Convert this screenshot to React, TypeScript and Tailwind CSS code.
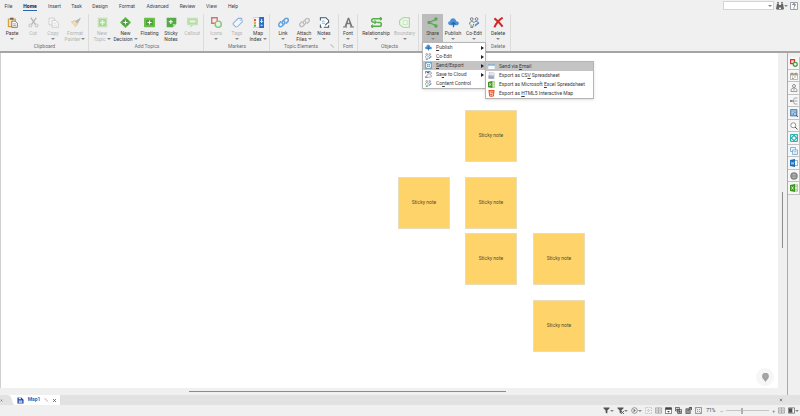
import type { ReactNode } from "react";

type IconProps = { name: string; className?: string };

const GREEN = "#6cc04a";

/* All icons share a 16x16 box */
const icons: Record<string, ReactNode> = {
  paste: (
    <>
      <path d="M2 3h10v11H2z" fill="#fbe3b4" stroke="#d99a3a" strokeWidth="1.6" />
      <path d="M4.500 1h5v3h-5z" fill="#666" />
      <path d="M7 6h5l3 3v6H7z" fill="#fff" stroke="#666" strokeWidth="1.200" />
      <path d="M9 10h4M9 12.500h4" stroke="#777" />
    </>
  ),
  cut: (
    <>
      <path d="M4 1l7 10M12 1L5 11" stroke="#b4b4b4" strokeWidth="1.800" />
      <circle cx="3.500" cy="12.500" r="2.200" fill="none" stroke="#c4c4c4" strokeWidth="1.500" />
      <circle cx="12.500" cy="12.500" r="2.200" fill="none" stroke="#c4c4c4" strokeWidth="1.500" />
    </>
  ),
  copy: (
    <>
      <path d="M1.500 1.500h8v10h-8z" fill="#f4f4f4" stroke="#c6c6c6" />
      <path d="M6 5h5l4 4v6H6z" fill="#fafafa" stroke="#bdbdbd" />
      <path d="M8 9h4M8 12h5" stroke="#cfcfcf" />
    </>
  ),
  painter: (
    <>
      <path d="M2 7l6 7 3-4-4-5z" fill="#f5ddb0" stroke="#dfc18e" />
      <path d="M8 6l3 3 4-7z" fill="#bbb" stroke="#aaa" />
    </>
  ),
  newTopic: (
    <>
      <path d="M1 1h14v14H1z" fill="#c5e5b8" />
      <path d="M3 3h10v10H3z" fill="#a6d695" />
      <path d="M8 4.500v7M4.500 8h7" stroke="#e9f6e4" strokeWidth="2" />
    </>
  ),
  decision: (
    <>
      <path d="M8 0l8 8-8 8-8-8z" fill="#5fb14a" />
      <path d="M4 4h8v8H4z" fill="#4a9f3b" />
      <path d="M8 5v6M5 8h6" stroke="#fff" strokeWidth="1.600" />
    </>
  ),
  floating: (
    <>
      <rect y="1" width="16" height="14" rx="1" fill={GREEN} />
      <path d="M3 4h10v8H3z" fill="#4da23b" />
      <path d="M8 5v6M5 8h6" stroke="#fff" strokeWidth="1.600" />
    </>
  ),
  sticky: (
    <>
      <path d="M1 1h14v9l-5 5H1z" fill="#55a946" />
      <path d="M10 15v-5h5z" fill="#a9dd98" />
      <path d="M7 4v6M4 7h6" stroke="#fff" strokeWidth="1.500" />
    </>
  ),
  callout: (
    <>
      <path d="M0 1h16v11H9l-4 4v-4H0z" fill="#c2e3b6" />
      <path d="M3 4h10v5H3z" fill="#e2f2db" stroke="#9fd08d" />
    </>
  ),
  markers: (
    <>
      <path d="M1 1h8v8H1z" fill="none" stroke="#d87070" strokeWidth="2" />
      <circle cx="10.500" cy="10.500" r="4.500" fill="#e7f4e3" stroke="#8ac27c" strokeWidth="2" />
    </>
  ),
  sideMarkers: (
    <>
      <path d="M1 1h8v8H1z" fill="#f4cccc" stroke="#c93b3b" strokeWidth="2.500" />
      <circle cx="10.500" cy="10.500" r="4" fill="#e7f4e3" stroke="#4b9a3d" strokeWidth="2.500" />
    </>
  ),
  tag: (
    <>
      <path d="M2 9l7-7 5 0 1 5-7 7q-2 1-3 0l-3-3q-1-1 0-2z" fill="#f3f7fc" stroke="#8fb2dc" strokeWidth="1.500" />
      <circle cx="12" cy="4.500" r="1" fill="#8fb2dc" />
    </>
  ),
  index: (
    <>
      <path d="M0 1h9v14H0z" fill="#fff" stroke="#aaa" strokeWidth=".7" />
      <path d="M1.500 3h3v3h-3z" fill="#dd5b4d" />
      <path d="M1.500 7h3v3h-3z" fill="#e8aa32" />
      <path d="M1.500 11h3v3h-3z" fill="#5fae4b" />
      <path d="M9 0h7v16H9z" fill="#2b6dc5" />
      <path d="M12.500 3v5m-2-2l2 2 2-2M11 12h3" stroke="#fff" fill="none" strokeWidth="1.300" />
    </>
  ),
  link: (
    <g fill="none" stroke="#64a2dc" strokeWidth="2.200" strokeLinecap="round">
      <path d="M7 10c-2-2-1-3 0-4l3-3c3-3 7 1 4 4l-2 2" />
      <path d="M9 6c2 2 1 3 0 4l-3 3c-3 3-7-1-4-4l2-2" />
    </g>
  ),
  clip: (
    <g fill="none" stroke="#bcbcbc" strokeWidth="2" strokeLinecap="round">
      <path d="M7 10c-2-2-1-3 0-4l3-3c3-3 7 1 4 4l-2 2" />
      <path d="M9 6c2 2 1 3 0 4l-3 3c-3 3-7-1-4-4l2-2" />
    </g>
  ),
  notes: (
    <>
      <path d="M2 1h8l4 4v10H2z" fill="#fff" />
      <path d="M2 5V1h8l4 4v4M14 12v3H7M2 11v4h2" fill="none" stroke="#3a5672" strokeWidth="1.500" />
      <path d="M4 9h5M4 6h4" stroke="#70a7db" strokeWidth="1.300" />
      <path d="M9 12l4-4" stroke="#333" strokeWidth="1.500" />
    </>
  ),
  font: (
    <>
      <path d="M2 14L7 1h2l5 13h-3l-1-3.500H6L5 14zM6.700 8.500h2.700L8 4z" fill="#777" />
      <path d="M0 14.500h6M10 14.500h6" stroke="#777" strokeWidth="1.600" />
    </>
  ),
  relation: (
    <g fill="none" stroke="#55ad49" strokeWidth="2.200">
      <path d="M16 2.500H3q-2 0-2 2.500t3 2.500h3M0 13.500h13q2 0 2-3t-3-2.500H9" />
      <path d="M13 0l3 2.500L13 5M5 5l3 2.500L5 10M3 11l-3 2.500L3 16" strokeWidth="1.500" />
    </g>
  ),
  boundary: (
    <>
      <path d="M6 1h9v14H6L1 11V5z" fill="#f1f8ee" stroke="#9ed391" strokeWidth="1.500" />
      <path d="M6 5h6v6H6z" fill="none" stroke="#b3dda9" />
    </>
  ),
  share: (
    <>
      <path d="M14 3L3 8l11 5" fill="none" stroke="#55ab4b" strokeWidth="1.800" />
      <circle cx="13" cy="3" r="2.500" fill="#55ab4b" />
      <circle cx="3" cy="8" r="2.500" fill="#55ab4b" />
      <circle cx="13" cy="13" r="2.500" fill="#55ab4b" />
    </>
  ),
  cloud: (
    <>
      <path d="M4 12C-1 12-1 6 3 6c1-6 8-5 9 0 5 0 5 6 0 6z" fill="#4b91d8" />
      <path d="M8 15V8M5 10.500L8 8l3 2.500" fill="none" stroke="#2866ad" strokeWidth="1.800" />
    </>
  ),
  people: (
    <>
      <circle cx="4" cy="3" r="2" fill="none" stroke="#667" strokeWidth="1.200" />
      <circle cx="11" cy="3" r="2" fill="none" stroke="#667" strokeWidth="1.200" />
      <path d="M1 11V8q3-4 6 0 3-4 7 0M3 14v-3M5 15l2-5" fill="none" stroke="#667" strokeWidth="1.200" />
      <path d="M8 14l1-3 5-4 1 2-5 4z" fill="#4d8dcb" />
      <path d="M2 15h4" stroke="#5aab4b" strokeWidth="2" />
    </>
  ),
  delete: <path d="M2 2q7 5 12 12M14 1Q6 6 2 15" fill="none" stroke="#cf2929" strokeWidth="3" />,
  exportBox: (
    <>
      <path d="M1 1h14v14H1z" fill="#e8f5fc" stroke="#3b83ba" strokeWidth="1.500" />
      <path d="M3 3l10 10M13 3L3 13" stroke="#3c87ba" strokeWidth="1.500" />
      <path d="M6 6h4v4H6z" fill="#fff" stroke="#3b83ba" />
    </>
  ),
  saveCloud: (
    <>
      <path d="M1 6V1h11l2 3v3M1 12v3h5" fill="none" stroke="#555" strokeWidth="1.500" />
      <path d="M4 2h6v3H4z" fill="#666" />
      <path d="M6 14c-4 0-3-5 0-5 1-4 6-3 6 0 4 0 4 5 0 5z" fill="#fff" stroke="#668" strokeWidth="1.200" />
    </>
  ),
  mail: (
    <>
      <path d="M0 3h16v12H0z" fill="#fff" stroke="#7c98b8" />
      <path d="M0 3h16v3H0z" fill="#7ba7c7" />
      <path d="M2 7l6 4 6-4" fill="none" stroke="#d5dde5" />
    </>
  ),
  csv: (
    <>
      <path d="M3 0h8l3 3v12H3z" fill="#f5f6fa" stroke="#8c94a5" />
      <path d="M1 8h12v7H1z" fill="#929bb6" />
      <path d="M5 3h5M5 6h6M3 11h8" stroke="#c2cada" strokeWidth="1.300" />
    </>
  ),
  excel: (
    <>
      <path d="M8 2h8v12H8z" fill="#fff" stroke="#5fa831" strokeWidth="1.500" />
      <path d="M10 5h5M10 8h5M10 11h5" stroke="#5fa831" />
      <path d="M0 2l10-2v16L0 14z" fill="#3f9420" />
      <path d="M3 5l4 6M7 5l-4 6" stroke="#fff" strokeWidth="1.500" />
    </>
  ),
  html: (
    <>
      <path d="M1 0h14l-1.500 14L8 16l-5.500-2z" fill="#e35a2c" />
      <path d="M12 4H5v4h6l-.5 4-2.500 1-3-1v-1.500" fill="none" stroke="#fff" strokeWidth="1.500" />
    </>
  ),
  binoculars: (
    <>
      <path d="M2 3h4v3h4V3h4l2 11h-6v-3H6v3H0z" fill="#666" />
      <path d="M2 1h4M10 1h4M1 15.500h14" stroke="#555" strokeWidth="1.500" />
    </>
  ),
  help: (
    <>
      <path d="M1 1h14v14H1z" fill="#fafafa" stroke="#7b8490" strokeWidth="1.500" />
      <path d="M5.500 6Q5.500 3.500 8 3.500T10.500 6Q10.500 7 8 9M8 11v2" fill="none" stroke="#445" strokeWidth="1.800" />
    </>
  ),
  calendar: (
    <>
      <path d="M1 3h14v12H1z" fill="#fff" stroke="#7d7a66" />
      <path d="M1 3h14v4H1z" fill="#a9a583" />
      <path d="M4 1v4M12 1v4M4 10h2M8 10h4M4 13h4" stroke="#777" strokeWidth="1.300" />
    </>
  ),
  person: (
    <>
      <circle cx="8" cy="4" r="3" fill="none" stroke="#777" strokeWidth="1.500" />
      <path d="M2 15V11l4-3h4l4 3v4zM8 9v4" fill="none" stroke="#777" strokeWidth="1.400" />
    </>
  ),
  branches: (
    <>
      <path d="M1 8h5M15 2H9L6 8l3 6h6M6 8h9" fill="none" stroke="#7d7d7d" strokeWidth="1.300" />
      <path d="M0 6h5v4H0z" fill="#888" />
    </>
  ),
  library: (
    <>
      <path d="M1 1h13v13H1z" fill="#73a9d7" stroke="#46749c" strokeWidth="1.400" />
      <path d="M3 4h9M3 7h9M3 10h5" stroke="#e4f1fb" />
      <circle cx="10" cy="10" r="3" fill="#c4dcf0" stroke="#365f85" />
      <path d="M12 12l4 4" stroke="#365f85" strokeWidth="2" />
    </>
  ),
  search: (
    <>
      <circle cx="6.500" cy="6.500" r="5" fill="#fff" stroke="#727272" strokeWidth="1.500" />
      <path d="M10 10l5 5" stroke="#555" strokeWidth="2" />
    </>
  ),
  focus: (
    <>
      <rect width="16" height="16" rx="2" fill="#32b3b0" />
      <path d="M3 6V3h3M10 3h3v3M13 10v3h-3M6 13H3v-3" fill="none" stroke="#fff" strokeWidth="1.500" />
      <circle cx="8" cy="8" r="3" fill="#fff" />
    </>
  ),
  layers: (
    <>
      <path d="M1 1h10v8H1z" fill="#e9f4fc" stroke="#5a9bd0" strokeWidth="1.400" />
      <path d="M5 6h10v9H5z" fill="#fff" stroke="#5a9bd0" strokeWidth="1.400" />
      <path d="M7 9h6M7 12h6" stroke="#5a9bd0" />
    </>
  ),
  word: (
    <>
      <path d="M9 3h6v10H9z" fill="#fff" stroke="#2777bd" />
      <path d="M0 2l10-2v16L0 14z" fill="#1769b5" />
      <path d="M2 5l1.500 6L5 7l1.500 4L8 5" fill="none" stroke="#fff" />
    </>
  ),
  globe: (
    <>
      <circle cx="8" cy="8" r="7.500" fill="#858585" />
      <path d="M4 5h8M3 8h10M4 11h8M8 3v10" stroke="#d5d5d5" strokeWidth=".8" />
    </>
  ),
  map: (
    <>
      <path d="M1 1h9l5 5v9H1z" fill="#26479f" />
      <path d="M4 1h5v4H4zM4 8h8v5H4z" fill="#dbe5fb" />
      <path d="M6 10h4" stroke="#26479f" />
    </>
  ),
  pencil: <path d="M2 3l3-1 9 9-2 2zM12 13l3 2" fill="none" stroke="#888" strokeWidth="1.500" />,
  close: <path d="M3 3l10 10M13 3L3 13" stroke="#555" strokeWidth="2.500" />,
  filter: <path d="M1 1h14v2L10 8v7l-4-2V8L1 3z" fill="#555" />,
  filterEdit: (
    <>
      <path d="M1 1h14v2L10 8v7l-4-2V8L1 3z" fill="#555" />
      <path d="M9 9l7 7M16 9l-7 7" stroke="#555" strokeWidth="2" />
    </>
  ),
  clock: (
    <>
      <circle cx="8" cy="8" r="6.500" fill="none" stroke="#6b6b6b" strokeWidth="1.500" />
      <path d="M6 4l5 4-5 4z" fill="#666" />
    </>
  ),
  dotted: <path d="M1 1h14v14H1zM5 8h6M8 5v6" fill="none" stroke="#a0a0a0" strokeWidth="1.500" strokeDasharray="2 2" />,
  panes: <path d="M1 2h14v12H1zM8 2v12M3 5h3M10 5h3M3 8h3M10 8h3M3 11h3M10 11h3" fill="none" stroke="#777" strokeWidth="1.200" />,
  schedule: (
    <>
      <path d="M1 2h14v13H1z" fill="#fff" stroke="#444" strokeWidth="1.500" />
      <path d="M1 1h14v5H1zM5 9h6l-3 4z" fill="#444" />
    </>
  ),
  linked: (
    <>
      <path d="M1 1h9v8H1zM6 6h9v9H6z" fill="#eee" stroke="#444" strokeWidth="1.700" />
      <path d="M3 4h5v3H3zM8 9h5v4H8z" fill="#555" />
    </>
  ),
  slides: (
    <>
      <path d="M2 4h10v11H2z" fill="#999" stroke="#444" strokeWidth="1.500" />
      <path d="M6 9l8-8M9 1h6v6" fill="none" stroke="#444" strokeWidth="2" />
    </>
  ),
  expand: <path d="M1 1h14v14H1zM4 4l3 3M12 4L9 7M4 12l3-3M9 9l4 4" fill="none" stroke="#666" strokeWidth="1.500" />,
  panel: (
    <>
      <path d="M1 2h14v12H1z" fill="#fff" stroke="#4a4a4a" strokeWidth="1.500" />
      <path d="M2 3h8v10H2z" fill="#505050" />
    </>
  ),
  pin: (
    <>
      <path d="M8 0C3 0 2 3 2 6c0 4 4 6 6 10 2-4 6-6 6-10 0-3-1-6-6-6z" fill="#a0a0a0" />
      <path d="M5 4h6M5 7h6" stroke="#b2b2b2" />
    </>
  ),
};

function Icon({ name, className = "size-[8px]" }: IconProps) {
  return (
    <svg viewBox="0 0 16 16" aria-hidden="true" className={`${className} shrink-0`}>
      {icons[name]}
    </svg>
  );
}

function Caret() {
  return (
    <svg viewBox="0 0 4 2" aria-hidden="true" className="h-[2px] w-[4px] shrink-0">
      <path d="M0 0h4L2 2z" fill="#888" />
    </svg>
  );
}

type Tool = {
  icon: string;
  label: string;
  second?: string;
  width: string;
  caret?: boolean;
  off?: boolean;
  active?: boolean;
};

type Group = { name: string; title?: string; className: string; tools: Tool[]; launcher?: boolean };

const groups: Group[] = [
  {
    name: "clipboard",
    title: "Clipboard",
    className: "w-[89px] pl-px",
    tools: [
      { icon: "paste", label: "Paste", width: "w-[22px]", caret: true },
      { icon: "cut", label: "Cut", width: "w-[20px]", off: true },
      { icon: "copy", label: "Copy", width: "w-[20px]", off: true, caret: true },
      { icon: "painter", label: "Format", second: "Painter", width: "w-[24px]", off: true, caret: true },
    ],
  },
  {
    name: "topics",
    title: "Add Topics",
    className: "w-[115px] pl-[2px]",
    tools: [
      { icon: "newTopic", label: "New", second: "Topic", width: "w-[22px]", off: true, caret: true },
      { icon: "decision", label: "New", second: "Decision", width: "w-[25px]", caret: true },
      { icon: "floating", label: "Floating", width: "w-[23px]" },
      { icon: "sticky", label: "Sticky", second: "Notes", width: "w-[20px]" },
      { icon: "callout", label: "Callout", width: "w-[22px]", off: true },
    ],
  },
  {
    name: "markers",
    title: "Markers",
    className: "w-[66px] pl-px",
    tools: [
      { icon: "markers", label: "Icons", width: "w-[22px]", off: true, caret: true },
      { icon: "tag", label: "Tags", width: "w-[20px]", off: true, caret: true },
      { icon: "index", label: "Map", second: "Index", width: "w-[22px]", caret: true },
    ],
  },
  {
    name: "elements",
    title: "Topic Elements",
    className: "w-[69px] pl-[2px]",
    launcher: true,
    tools: [
      { icon: "link", label: "Link", width: "w-[22px]", caret: true },
      { icon: "clip", label: "Attach", second: "Files", width: "w-[20px]", caret: true },
      { icon: "notes", label: "Notes", width: "w-[20px]", caret: true },
    ],
  },
  {
    name: "font",
    title: "Font",
    className: "w-[19px]",
    tools: [{ icon: "font", label: "Font", width: "w-[18px]", caret: true }],
  },
  {
    name: "objects",
    title: "Objects",
    className: "w-[61px] pl-[3px]",
    tools: [
      { icon: "relation", label: "Relationship", width: "w-[30px]", caret: true },
      { icon: "boundary", label: "Boundary", width: "w-[27px]", off: true, caret: true },
    ],
  },
  {
    name: "share",
    className: "w-[67px] pl-[3px]",
    tools: [
      { icon: "share", label: "Share", width: "w-[21px]", caret: true, active: true },
      { icon: "cloud", label: "Publish", width: "w-[20px]", caret: true },
      { icon: "people", label: "Co-Edit", width: "w-[22px]", caret: true },
    ],
  },
  {
    name: "delete",
    title: "Delete",
    className: "w-[25px]",
    tools: [{ icon: "delete", label: "Delete", width: "w-[24px]", caret: true }],
  },
];

const tabs = [
  { label: "File", width: "w-[17px]" },
  { label: "Home", width: "w-[26px]", active: true },
  { label: "Insert", width: "w-[23px]" },
  { label: "Task", width: "w-[21px]" },
  { label: "Design", width: "w-[26px]" },
  { label: "Format", width: "w-[28px]" },
  { label: "Advanced", width: "w-[33px]" },
  { label: "Review", width: "w-[27px]" },
  { label: "View", width: "w-[21px]" },
  { label: "Help", width: "w-[22px]" },
];

type Entry = { icon: string; before: string; key: string; after: string; more?: boolean; active?: boolean };

const shareMenu: Entry[] = [
  { icon: "cloud", before: "", key: "P", after: "ublish", more: true },
  { icon: "people", before: "", key: "C", after: "o-Edit", more: true },
  { icon: "exportBox", before: "", key: "S", after: "end/Export", more: true, active: true },
  { icon: "saveCloud", before: "Sa", key: "v", after: "e to Cloud", more: true },
  { icon: "people", before: "Co", key: "n", after: "tent Control" },
];

const exportMenu: Entry[] = [
  { icon: "mail", before: "Send via ", key: "E", after: "mail", active: true },
  { icon: "csv", before: "Export as CS", key: "V", after: " Spreadsheet" },
  { icon: "excel", before: "Export as Microsoft ", key: "E", after: "xcel Spreadsheet" },
  { icon: "html", before: "Export as ", key: "H", after: "TML5 Interactive Map" },
];

/* Positions on the map canvas */
const notes = [
  { left: 464, top: 57 },
  { left: 397, top: 124 },
  { left: 464, top: 124 },
  { left: 464, top: 180 },
  { left: 532, top: 180 },
  { left: 532, top: 247 },
];

const sideTools = [
  { icon: "sideMarkers", label: "Icons" },
  { icon: "calendar", label: "Task Info" },
  { icon: "person", label: "Resources" },
  { icon: "branches", label: "Map Parts" },
  { icon: "library", label: "Library" },
  { icon: "search", label: "Search" },
  { icon: "focus", label: "Focus" },
  { icon: "layers", label: "Snap" },
  { icon: "word", label: "Outlook" },
  { icon: "globe", label: "Browser" },
  { icon: "excel", label: "Excel" },
];

function ToolButton({ tool }: { tool: Tool }) {
  const { icon, label, second, width, caret, off, active } = tool;
  return (
    <button
      disabled={off}
      className={`flex h-[28px] flex-col items-center pt-[3px] leading-[6px] ${width} ${active ? "bg-[#bcbcbc]" : ""} ${off ? "text-[#b4b4b4]" : "text-[#3c3c3c]"}`}
    >
      <Icon name={icon} className="mb-[2px] size-[11px]" />
      <span>{label}</span>
      <span className="flex h-[6px] items-center gap-px">
        {second}
        {caret && <Caret />}
      </span>
    </button>
  );
}

function RibbonGroup({ group }: { group: Group }) {
  return (
    <section className={`flex shrink-0 flex-col border-r border-[#dcdcdc] ${group.className}`}>
      <div className="flex">
        {group.tools.map((tool, i) => (
          <ToolButton key={i} tool={tool} />
        ))}
      </div>
      {group.title && (
        <div className="flex justify-center pt-px leading-[6px] text-[#6f6f6f]">
          <span className="flex-1 text-center">{group.title}</span>
          {group.launcher && (
            <button aria-label="Topic Elements options" className="mr-[4px]">
              <Icon name="pencil" className="size-[4px]" />
            </button>
          )}
        </div>
      )}
    </section>
  );
}

function Menu({ items, label, className }: { items: Entry[]; label: string; className: string }) {
  return (
    <ul role="menu" aria-label={label} className={`absolute z-10 border border-[#b5b5b5] bg-white shadow-sm ${className}`}>
      {items.map((item) => (
        <li key={item.before + item.after} role="none">
          <button
            role="menuitem"
            className={`flex h-[9px] w-full items-center gap-[4px] pr-px pl-[2px] text-left leading-[9px] whitespace-nowrap text-[#3c3c3c] ${item.active ? "bg-[#c4c4c4]" : ""}`}
          >
            <Icon name={item.icon} className="size-[7px]" />
            <span className="flex-1">
              {item.before}
              <u>{item.key}</u>
              {item.after}
            </span>
            {item.more && (
              <svg viewBox="0 0 3 4" aria-hidden="true" className="h-[4px] w-[3px]">
                <path d="M0 0l3 2-3 2z" fill="#222" />
              </svg>
            )}
          </button>
        </li>
      ))}
    </ul>
  );
}

function StatusButton({ icon, label, caret }: { icon: string; label: string; caret?: boolean }) {
  return (
    <button aria-label={label} className="flex items-center">
      <Icon name={icon} className="size-[7px]" />
      {caret && <Caret />}
    </button>
  );
}

export default function App() {
  return (
    <div className="relative flex min-h-screen flex-col bg-[#f0f0f0] font-['Roboto','Noto_Sans',sans-serif] text-[5px] text-[#444]">
      <header className="border-b-2 border-[#a5a5a5]">
        <div className="flex h-[14px] items-start justify-between">
          <nav className="flex">
            {tabs.map((tab) => (
              <button
                key={tab.label}
                className={`flex h-[12px] flex-col items-center pt-[3px] leading-[7px] ${tab.width} ${tab.active ? "font-bold text-[#222]" : ""}`}
              >
                {tab.label}
                {tab.active && <span className="h-px w-[14px] shrink-0 bg-[#2a66b0]" />}
              </button>
            ))}
          </nav>
          <div className="flex items-center gap-[2px] pt-px pr-[2px]">
            <label className="flex h-[9px] w-[51px] items-center border border-[#d5d5d5] bg-white pr-px">
              <input aria-label="Search" className="w-full min-w-0 outline-none" />
              <Caret />
            </label>
            <button aria-label="Find" className="flex items-center">
              <Icon name="binoculars" className="size-[8px]" />
              <Caret />
            </button>
            <button aria-label="Help">
              <Icon name="help" className="size-[8px]" />
            </button>
          </div>
        </div>
        <div className="flex h-[37px]">
          {groups.map((group) => (
            <RibbonGroup key={group.name} group={group} />
          ))}
        </div>
      </header>

      <Menu items={shareMenu} label="Share" className="top-[42px] left-[422px] w-[64px]" />
      <Menu items={exportMenu} label="Send/Export" className="top-[61px] left-[485px] w-[109px]" />

      <div className="flex flex-1">
        <div className="flex min-w-0 flex-1 flex-col">
          <div className="flex flex-1">
            <main className="relative flex-1 border-l border-[#d0d0d0] bg-white">
              {notes.map((note, i) => (
                <div
                  key={i}
                  className="absolute flex size-[52px] items-center justify-center border border-[#e9dcb8] bg-[#fdd36a] text-[#5b4e30]"
                  style={{ left: note.left, top: note.top }}
                >
                  Sticky note
                </div>
              ))}
              <button aria-label="Map pin" className="absolute right-[4px] bottom-[2px] flex size-[18px] items-center justify-center rounded-full bg-[#f6f6f6]">
                <Icon name="pin" className="size-[9px]" />
              </button>
            </main>
            <div className="flex w-[9px] justify-center pt-[139px]">
              <div className="h-[56px] w-px bg-[#8c8c8c]" />
            </div>
          </div>
          <div className="h-[7px] pt-[3px] pl-[189px]">
            <div className="h-px w-[317px] bg-[#8c8c8c]" />
          </div>
        </div>
        <aside className="flex w-[13px] flex-col border-l border-[#aaa] pt-[4px]">
          {sideTools.map((tool, i) => (
            <button
              key={tool.label}
              aria-label={tool.label}
              className={`flex items-center justify-center border-r border-b border-[#c2c2c2] bg-[#f7f7f7] ${i % 2 ? "h-[12px]" : "h-[13px]"}`}
            >
              <Icon name={tool.icon} className="size-[8px]" />
            </button>
          ))}
        </aside>
      </div>

      <div className="flex h-[10px] items-center bg-[#e2e2e2]">
        <button aria-label="Previous map" className="w-[7px]">
          <Icon name="close" className="size-[3px]" />
        </button>
        <svg viewBox="0 0 8 10" aria-hidden="true" className="h-[10px] w-[8px]">
          <path d="M0 0q4 0 5 5t3 5V0z" fill="#fff" />
        </svg>
        <div className="flex h-full items-center bg-white pr-[3px] pl-[2px]">
          <Icon name="map" className="size-[7px]" />
          <button className="w-[20px] text-center font-bold text-[#266cc0]">Map1</button>
          <button aria-label="Edit Map1" className="w-[8px]">
            <Icon name="pencil" className="size-[4px]" />
          </button>
          <button aria-label="Close Map1">
            <Icon name="close" className="size-[5px]" />
          </button>
        </div>
        <button aria-label="Close all maps" className="mr-[17px] ml-auto">
          <Icon name="close" className="size-[4px]" />
        </button>
      </div>

      <footer className="flex h-[11px] items-center justify-end gap-[3px] pr-px">
        <StatusButton icon="filter" label="Filter" caret />
        <StatusButton icon="filterEdit" label="Power Filter" caret />
        <StatusButton icon="clock" label="Show time" caret />
        <StatusButton icon="dotted" label="Map view" />
        <StatusButton icon="panes" label="Outline view" />
        <StatusButton icon="schedule" label="Schedule view" />
        <StatusButton icon="linked" label="Linked maps view" />
        <StatusButton icon="slides" label="Slides view" />
        <StatusButton icon="expand" label="Fit map" />
        <span className="w-[12px] text-center">71%</span>
        <button aria-label="Zoom out" className="leading-[6px] text-[#777]">–</button>
        <input
          type="range"
          aria-label="Zoom"
          defaultValue={36}
          className="h-[6px] w-[43px] appearance-none bg-[linear-gradient(#c5c5c5,#c5c5c5)] bg-[length:100%_1px] bg-center bg-no-repeat [&::-webkit-slider-thumb]:h-[6px] [&::-webkit-slider-thumb]:w-[2px] [&::-webkit-slider-thumb]:appearance-none [&::-webkit-slider-thumb]:bg-[#b0b0b0]"
        />
        <button aria-label="Zoom in" className="leading-[6px] text-[#777]">+</button>
        <StatusButton icon="panes" label="Two panes" />
        <StatusButton icon="panel" label="Task panes" caret />
      </footer>
    </div>
  );
}
